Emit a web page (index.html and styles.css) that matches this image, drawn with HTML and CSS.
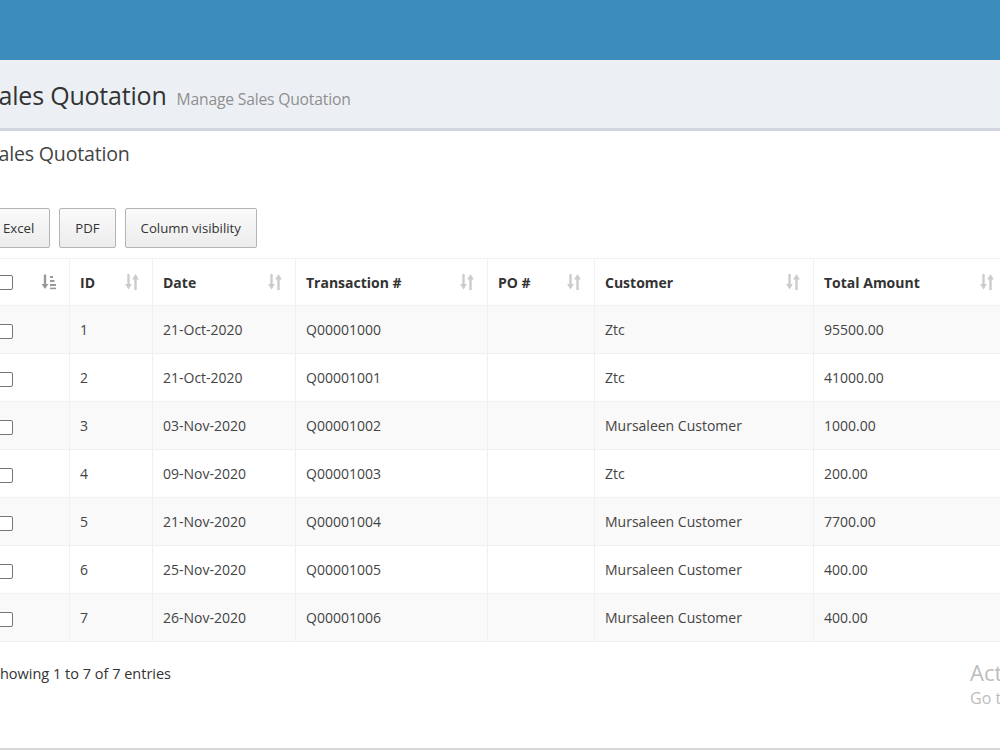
FILE: index.html
```html
<!DOCTYPE html>
<html>
<head>
<meta charset="utf-8">
<link rel="stylesheet" href="styles.css">
</head>
<body>
<header class="topbar"></header>
<section class="content-header">
  <h1 class="page-title">Sales Quotation <small class="page-sub">Manage Sales Quotation</small></h1>
</section>
<main class="box">
  <h3 class="box-title">Sales Quotation</h3>
  <div class="dt-buttons">
    <button class="btn">Excel</button>
    <button class="btn">PDF</button>
    <button class="btn">Column visibility</button>
  </div>
  <table class="grid">
    <colgroup>
      <col class="c-chk"><col class="c-id"><col class="c-date"><col class="c-tx"><col class="c-po"><col class="c-cust"><col class="c-amt">
    </colgroup>
    <thead>
      <tr>
        <th><div class="th-in"><span class="chk"></span>
          <svg class="sort" viewBox="0 0 16 18"><path d="M4 1.5v11.5" stroke="#999" stroke-width="2.4" fill="none"/><path d="M0.6 11L4 16l3.4-5z" fill="#999"/><rect x="9" y="3" width="3" height="2" fill="#999"/><rect x="9" y="7" width="4.5" height="2" fill="#999"/><rect x="9" y="11" width="6" height="2" fill="#999"/><rect x="9" y="14.6" width="6" height="1.6" fill="#999"/></svg></div></th>
        <th><div class="th-in">ID<svg class="sort" viewBox="0 0 16 18"><path d="M4.5 1v12" stroke="#ccc" stroke-width="2.4"/><path d="M1.1 11L4.5 16.5 7.9 11z" fill="#ccc"/><path d="M11.5 17V5" stroke="#ccc" stroke-width="2.4"/><path d="M8.1 6.5L11.5 1 14.9 6.5z" fill="#ccc"/></svg></div></th>
        <th><div class="th-in">Date<svg class="sort" viewBox="0 0 16 18"><path d="M4.5 1v12" stroke="#ccc" stroke-width="2.4"/><path d="M1.1 11L4.5 16.5 7.9 11z" fill="#ccc"/><path d="M11.5 17V5" stroke="#ccc" stroke-width="2.4"/><path d="M8.1 6.5L11.5 1 14.9 6.5z" fill="#ccc"/></svg></div></th>
        <th><div class="th-in">Transaction #<svg class="sort" viewBox="0 0 16 18"><path d="M4.5 1v12" stroke="#ccc" stroke-width="2.4"/><path d="M1.1 11L4.5 16.5 7.9 11z" fill="#ccc"/><path d="M11.5 17V5" stroke="#ccc" stroke-width="2.4"/><path d="M8.1 6.5L11.5 1 14.9 6.5z" fill="#ccc"/></svg></div></th>
        <th><div class="th-in">PO #<svg class="sort" viewBox="0 0 16 18"><path d="M4.5 1v12" stroke="#ccc" stroke-width="2.4"/><path d="M1.1 11L4.5 16.5 7.9 11z" fill="#ccc"/><path d="M11.5 17V5" stroke="#ccc" stroke-width="2.4"/><path d="M8.1 6.5L11.5 1 14.9 6.5z" fill="#ccc"/></svg></div></th>
        <th><div class="th-in">Customer<svg class="sort" viewBox="0 0 16 18"><path d="M4.5 1v12" stroke="#ccc" stroke-width="2.4"/><path d="M1.1 11L4.5 16.5 7.9 11z" fill="#ccc"/><path d="M11.5 17V5" stroke="#ccc" stroke-width="2.4"/><path d="M8.1 6.5L11.5 1 14.9 6.5z" fill="#ccc"/></svg></div></th>
        <th><div class="th-in">Total Amount<svg class="sort" viewBox="0 0 16 18"><path d="M4.5 1v12" stroke="#ccc" stroke-width="2.4"/><path d="M1.1 11L4.5 16.5 7.9 11z" fill="#ccc"/><path d="M11.5 17V5" stroke="#ccc" stroke-width="2.4"/><path d="M8.1 6.5L11.5 1 14.9 6.5z" fill="#ccc"/></svg></div></th>
      </tr>
    </thead>
    <tbody>
      <tr><td><span class="chk"></span></td><td>1</td><td>21-Oct-2020</td><td>Q00001000</td><td></td><td>Ztc</td><td>95500.00</td></tr>
      <tr><td><span class="chk"></span></td><td>2</td><td>21-Oct-2020</td><td>Q00001001</td><td></td><td>Ztc</td><td>41000.00</td></tr>
      <tr><td><span class="chk"></span></td><td>3</td><td>03-Nov-2020</td><td>Q00001002</td><td></td><td>Mursaleen Customer</td><td>1000.00</td></tr>
      <tr><td><span class="chk"></span></td><td>4</td><td>09-Nov-2020</td><td>Q00001003</td><td></td><td>Ztc</td><td>200.00</td></tr>
      <tr><td><span class="chk"></span></td><td>5</td><td>21-Nov-2020</td><td>Q00001004</td><td></td><td>Mursaleen Customer</td><td>7700.00</td></tr>
      <tr><td><span class="chk"></span></td><td>6</td><td>25-Nov-2020</td><td>Q00001005</td><td></td><td>Mursaleen Customer</td><td>400.00</td></tr>
      <tr><td><span class="chk"></span></td><td>7</td><td>26-Nov-2020</td><td>Q00001006</td><td></td><td>Mursaleen Customer</td><td>400.00</td></tr>
    </tbody>
  </table>
  <div class="info">Showing 1 to 7 of 7 entries</div>
</main>
<div class="watermark"><div class="wm-1">Activate Windows</div><div class="wm-2">Go to Settings to activate Windows.</div></div>
</body>
</html>
```

FILE: styles.css
```css
html, body {
  margin: 0;
  padding: 0;
  width: 1000px;
  height: 750px;
  overflow: hidden;
  background: #fff;
  font-family: "Open Sans", "Lato", sans-serif;
  color: #333;
}

.topbar {
  height: 60px;
  background: #3c8dbc;
}

.content-header {
  height: 68px;
  background: #ecf0f5;
  border-bottom: 3px solid #d2d6de;
  display: flex;
  align-items: center;
  margin-left: -15px;
}

.page-title {
  margin: 0;
  font-size: 25px;
  font-weight: 400;
  color: #333;
  display: flex;
  align-items: baseline;
  gap: 10px;
  letter-spacing: -0.2px;
  padding-top: 2px;
}

.page-sub {
  font-size: 15.7px;
  color: #8f8f8f;
  font-weight: 400;
  letter-spacing: -0.2px;
}

.box {
  margin-left: -13px;
  position: relative;
  height: 619px;
  border-bottom: 2px solid #d8d8d8;
  box-sizing: border-box;
}

.box-title {
  margin: 0;
  padding-top: 11px;
  font-size: 19.6px;
  font-weight: 400;
  color: #444;
  line-height: 24px;
  padding-left: 1px;
  letter-spacing: -0.2px;
}

.dt-buttons {
  display: flex;
  gap: 9px;
  margin-top: 42px;
  height: 40px;
}

.btn {
  font-family: inherit;
  font-size: 13.2px;
  color: #333;
  background: linear-gradient(#fafafa, #ececec);
  border: 1px solid #b4b4b4;
  border-radius: 2px;
  padding: 0 15px;
  height: 40px;
}

.grid {
  margin-top: 10px;
  border-collapse: collapse;
  table-layout: fixed;
  width: 1020px;
  font-size: 14px;
}

.c-chk { width: 82px; }
.c-id { width: 83px; }
.c-date { width: 143px; }
.c-tx { width: 192px; }
.c-po { width: 107px; }
.c-cust { width: 219px; }
.c-amt { width: 194px; }

.grid th, .grid td {
  border: 1px solid #f1f1f1;
  padding: 0 10px;
  text-align: left;
  color: #333;
}

.grid th {
  height: 46px;
  font-weight: 700;
  color: #333;
}

.grid td {
  height: 47px;
  color: #444;
}

.grid tbody tr:nth-child(odd) td {
  background: #f9f9f9;
}

.th-in {
  display: flex;
  align-items: center;
  justify-content: space-between;
}

.sort {
  width: 16px;
  height: 18px;
  flex: none;
  margin-right: 2px;
}

.chk {
  display: inline-block;
  width: 13px;
  height: 13px;
  border: 1px solid #767676;
  border-radius: 2px;
  background: #fff;
  vertical-align: middle;
}

.info {
  margin-top: 22px;
  font-size: 14.5px;
  color: #333;
  padding-left: 5px;
}

.watermark {
  position: absolute;
  left: 970px;
  top: 658px;
  color: #bdbdbd;
  white-space: nowrap;
}

.wm-1 {
  font-size: 22px;
  line-height: 28px;
}

.wm-2 {
  font-size: 16px;
  line-height: 24px;
}
```
